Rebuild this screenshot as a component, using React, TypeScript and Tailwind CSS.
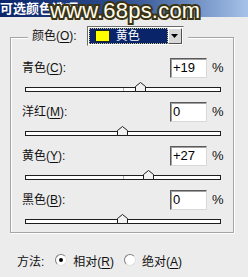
import React from 'react';

const sliders = [
    { label: '青色', hot: 'C', value: '+19', pct: 19 },
    { label: '洋红', hot: 'M', value: '0', pct: 0 },
    { label: '黄色', hot: 'Y', value: '+27', pct: 27 },
    { label: '黑色', hot: 'B', value: '0', pct: 0 },
];

const SliderRow = ({ label, hot, value, pct }: { label: string; hot: string; value: string; pct: number }) => (
    <div>
        <div className="flex items-center h-[20px] pl-[11px] pr-[11px]">
            <span className="flex-1 text-[12px] leading-[16px] text-[#111]">
                {label}(<span className="underline underline-offset-2">{hot}</span>):
            </span>
            <div className="w-[37px] h-[20px] bg-white border border-t-[#5a5a5a] border-l-[#5a5a5a] border-b-[#d8d8d8] border-r-[#d8d8d8] shadow-[inset_1px_1px_0_#a0a0a0] pl-[2px] text-[13px] leading-[18px] text-black">
                {value}
            </div>
            <span className="ml-[5px] w-[10px] text-[13px] leading-[16px] text-[#111]">%</span>
        </div>
        <div className="relative mt-[9px] ml-[14px] mr-[12px] h-[5px] border border-[#1e1e1e] bg-white">
            <span className="absolute left-1/2 top-0 w-px h-[3px] bg-[#b0b0b0]" />
            <svg
                width="11"
                height="10"
                viewBox="0 0 11 10"
                className="absolute top-[-6px]"
                style={{ left: `calc(${(pct + 100) / 2}% - 6px)` }}
            >
                <polygon points="0.5,4.5 5.5,0.5 10.5,4.5 10.5,9.5 0.5,9.5" fill="#f2f2f2" stroke="#1e1e1e" />
            </svg>
        </div>
    </div>
);

const Radio = ({ checked }: { checked?: boolean }) => (
    <span className="relative inline-block w-[12px] h-[12px] rounded-full bg-white border border-t-[#808080] border-l-[#808080] border-b-[#e0e0e0] border-r-[#e0e0e0]">
        {checked && <span className="absolute left-[3px] top-[3px] w-[4px] h-[4px] rounded-full bg-black" />}
    </span>
);

const App = () => {
    return (
        <div className="w-[248px] h-[277px] overflow-hidden bg-[#ececec] font-['Liberation_Sans','Noto_Sans_CJK_SC',sans-serif]">
            {/* title bar */}
            <div className="relative h-[17px] bg-linear-to-r from-[#0a246a] via-[#2f4f8f] to-[#a6c2ea]">
                <span className="block pl-0 pt-[1px] text-[13px] leading-[15px] font-bold text-white">可选颜色选项</span>
                <span className="absolute left-[50px] top-[-3px] text-[22px] leading-[28px] text-[#fffdf0] [-webkit-text-stroke:4px_#3b3312] [paint-order:stroke_fill] tracking-[0.2px]">
                    www.68ps.com
                </span>
            </div>

            {/* group box */}
            <div className="mt-[20px] ml-[10px] w-[224px] border border-[#a5a5a5] shadow-[inset_1px_1px_0_#fff,1px_1px_0_#fff]">
                <div className="-mt-[12px] ml-[17px] flex items-center w-fit px-[4px] bg-[#ececec]">
                    <span className="text-[12px] leading-[16px] text-[#111]">
                        颜色(<span className="underline underline-offset-2">O</span>):
                    </span>
                    <div className="ml-[10px] flex w-[97px] h-[20px] border border-t-[#6a6a6a] border-l-[#6a6a6a] border-b-[#e8e8e8] border-r-[#e8e8e8] bg-white p-[1px]">
                        <div className="flex-1 flex items-center bg-[#0a246a] outline outline-dotted outline-[#c8c080] -outline-offset-1">
                            <span className="ml-[6px] w-[15px] h-[12px] bg-[#ffff00] border border-[#222]" />
                            <span className="ml-[6px] text-[12px] leading-[16px] text-white">黄色</span>
                        </div>
                        <div className="w-[14px] flex items-center justify-center bg-[#d8d8d8] border border-t-white border-l-white border-b-[#505050] border-r-[#505050]">
                            <svg width="7" height="4" viewBox="0 0 7 4">
                                <polygon points="0,0 7,0 3.5,4" fill="#000" />
                            </svg>
                        </div>
                    </div>
                </div>

                <div className="mt-[12px] flex flex-col gap-[10px] pb-[8px]">
                    {sliders.map((s) => (
                        <SliderRow key={s.hot} {...s} />
                    ))}
                </div>
            </div>

            {/* method */}
            <div className="mt-[21px] pl-[17px] flex items-center text-[12px] leading-[16px] text-[#111]">
                <span>方法:</span>
                <span className="ml-[11px]"><Radio checked /></span>
                <span className="ml-[6px]">
                    相对(<span className="underline underline-offset-2">R</span>)
                </span>
                <span className="ml-[10px]"><Radio /></span>
                <span className="ml-[6px]">
                    绝对(<span className="underline underline-offset-2">A</span>)
                </span>
            </div>
        </div>
    );
};

export default App;
